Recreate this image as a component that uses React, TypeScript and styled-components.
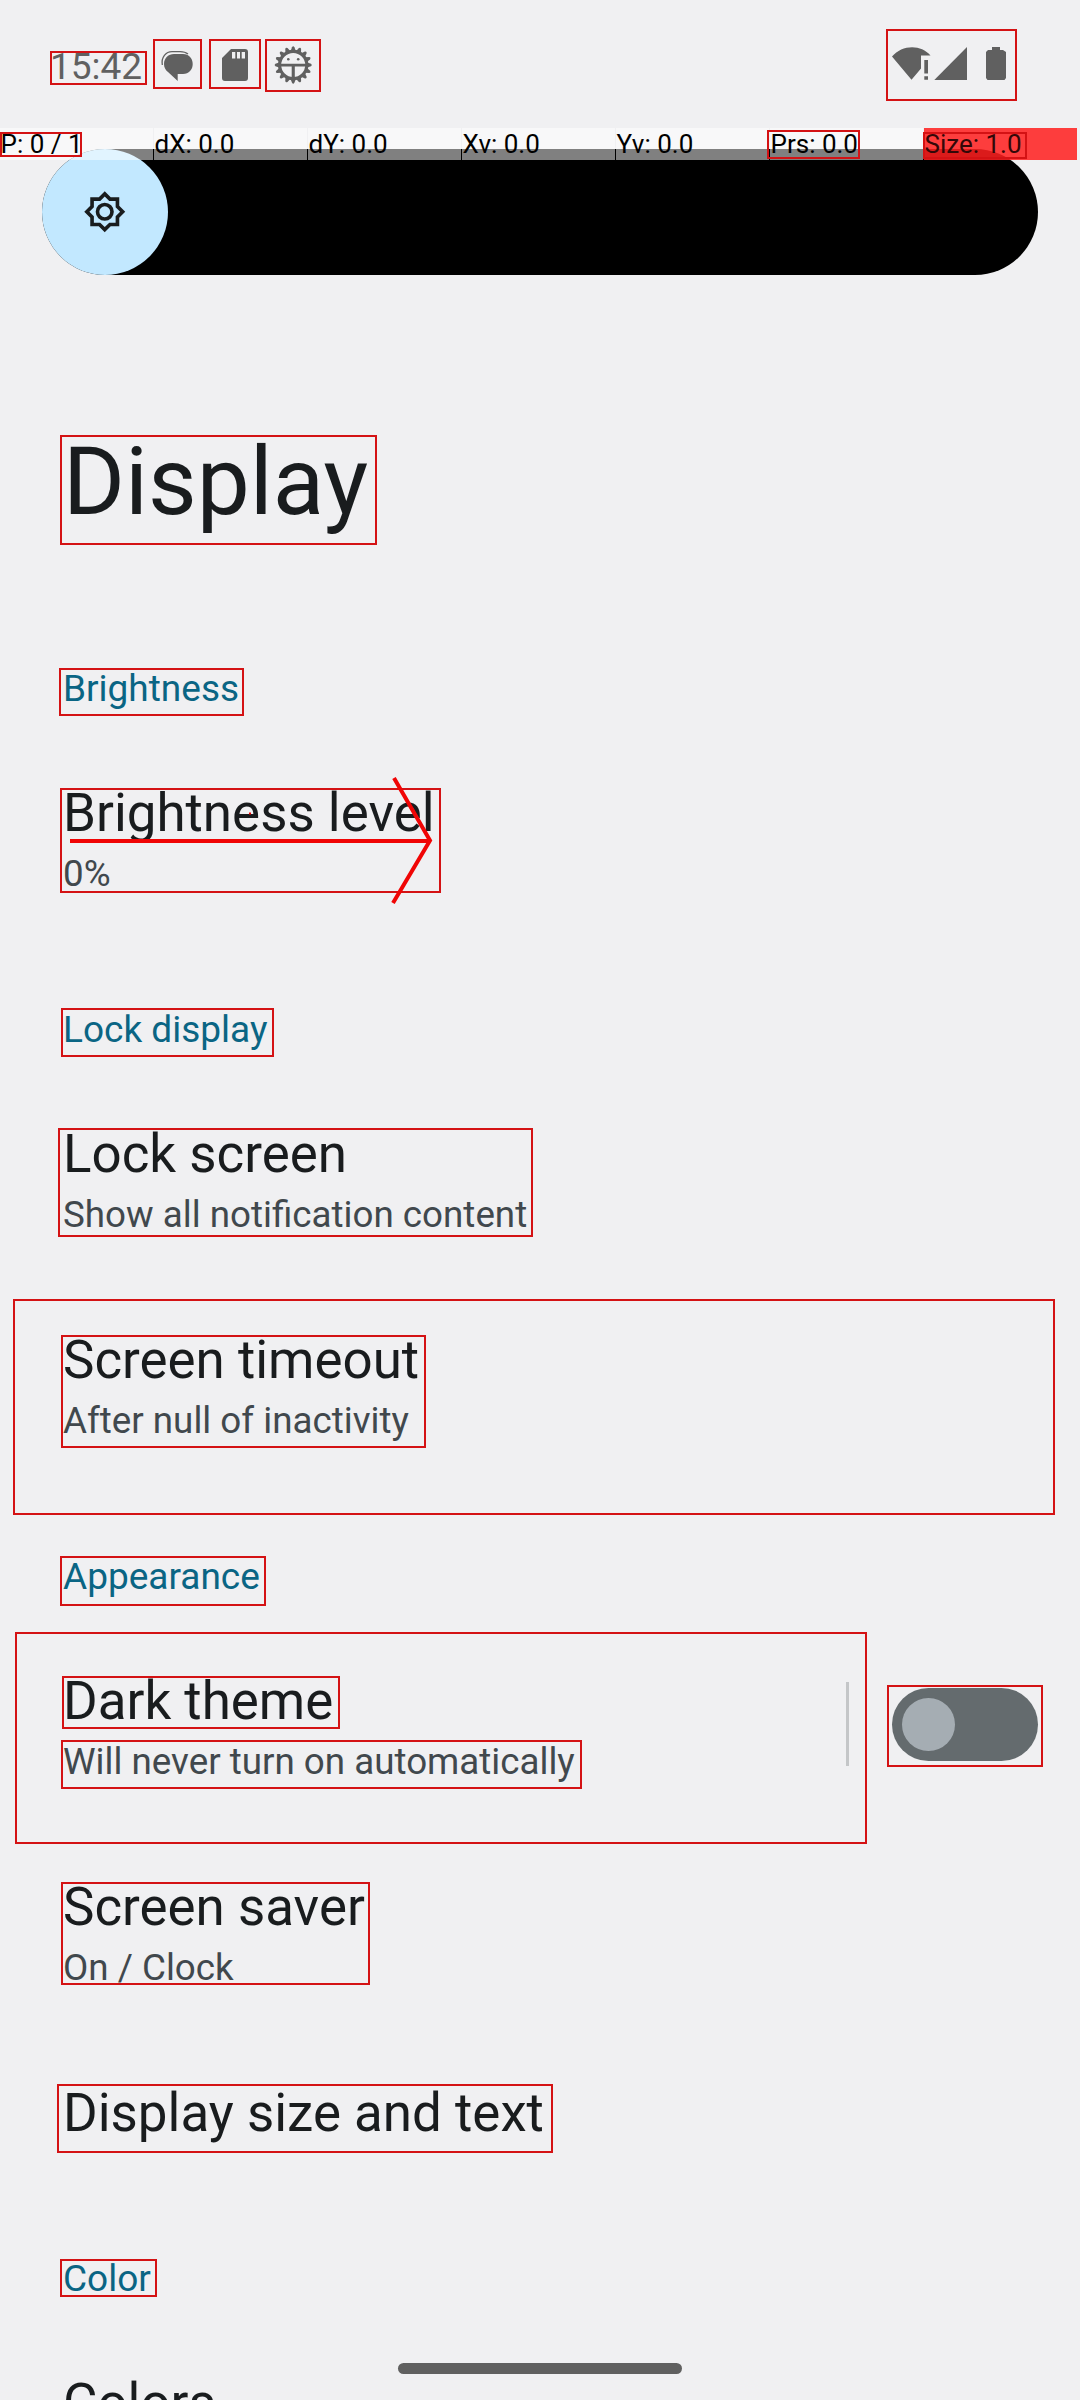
import React from "react";
import styled, { createGlobalStyle } from "styled-components";

const GlobalStyle = createGlobalStyle`
  html, body { margin: 0; padding: 0; background: #f0f0f2; }
  * { box-sizing: border-box; }
`;

const Screen = styled.main`
  position: relative;
  width: 1080px;
  height: 2400px;
  overflow: hidden;
  background: #f0f0f2;
  font-family: Roboto, "Noto Sans", sans-serif;
  color: #191c1e;
`;

const StatusBar = styled.header`
  display: flex;
  justify-content: space-between;
  height: 128px;
  padding: 41px 69px 0 50px;
  color: #606060;
`;

const StatusGroup = styled.div`
  display: flex;
  align-items: flex-start;
`;

const Clock = styled.span`
  width: 106px;
  padding: 4px 0 0 0;
  font-size: 37px;
  line-height: 43px;
`;

const StatusIcon = styled.svg<{ $width: number }>`
  display: block;
  width: ${(p) => p.$width}px;
  height: 48px;
  fill: currentColor;
`;

const SliderArea = styled.section`
  padding: 21px 42px 0;
`;

const SliderTrack = styled.div`
  display: flex;
  height: 126px;
  border-radius: 63px;
  background: #000;
`;

const SliderThumb = styled.div`
  display: flex;
  align-items: center;
  justify-content: center;
  width: 126px;
  height: 126px;
  border-radius: 50%;
  background: #c2e8ff;
  color: #191c1e;
`;

const PageTitle = styled.h1`
  margin: 0;
  height: 326px;
  padding: 151px 63px 0;
  font-size: 94.5px;
  font-weight: 400;
  line-height: 111px;
`;

const Category = styled.h2`
  margin: 0;
  height: 135px;
  padding: 66px 63px 0;
  font-size: 37px;
  font-weight: 400;
  line-height: 43px;
  color: #0a6584;
`;

const Row = styled.div`
  display: flex;
  align-items: center;
  justify-content: space-between;
  padding: 46px 42px 47px 63px;
`;

const RowText = styled.div`
  display: flex;
  flex-direction: column;
  gap: 8px;
`;

const RowTitle = styled.span`
  font-size: 52.9px;
  line-height: 62px;
  white-space: nowrap;
`;

const RowSummary = styled.span`
  font-size: 36.75px;
  line-height: 43px;
  white-space: nowrap;
  color: #41484d;
`;

const SwitchArea = styled.div`
  display: flex;
  align-items: center;
  gap: 43px;
  height: 84px;
  margin: 12px 0 17px;
`;

const Divider = styled.div`
  width: 3px;
  height: 84px;
  background: #c4c6c8;
`;

const SwitchTrack = styled.div`
  display: flex;
  align-items: center;
  width: 146px;
  height: 73px;
  padding-left: 10px;
  border-radius: 37px;
  background: #646b6e;
`;

const SwitchThumb = styled.div`
  width: 53px;
  height: 53px;
  border-radius: 50%;
  background: #a5adb3;
`;

const PointerBar = styled.div`
  position: absolute;
  top: 128px;
  left: 0;
  display: flex;
  gap: 1px;
  width: 1080px;
  height: 32px;
`;

const PointerCell = styled.span<{ $alert?: boolean }>`
  width: 153px;
  padding-left: 0.5px;
  font-size: 26px;
  line-height: 32px;
  white-space: nowrap;
  color: ${(p) => (p.$alert ? "#330808" : "#000")};
  background: ${(p) => (p.$alert ? "rgba(255, 32, 32, 0.86)" : "rgba(255, 255, 255, 0.5)")};
`;

const HomeHandle = styled.div`
  position: absolute;
  left: 398px;
  top: 2363px;
  width: 284px;
  height: 11px;
  border-radius: 6px;
  background: #606060;
`;

const Mark = styled.div<{ $box: number[] }>`
  position: absolute;
  left: ${(p) => p.$box[0]}px;
  top: ${(p) => p.$box[1]}px;
  width: ${(p) => p.$box[2] - p.$box[0]}px;
  height: ${(p) => p.$box[3] - p.$box[1]}px;
  border: 2px solid #d41214;
`;

const SwipeArrow = styled.svg`
  position: absolute;
  left: 60px;
  top: 770px;
  width: 380px;
  height: 140px;
  fill: none;
  stroke: #f00505;
  stroke-width: 4;
`;

/* Left, top, right, bottom of each highlighted element. */
const marks: number[][] = [
  [50, 51, 147, 85],
  [153, 39, 202, 89],
  [209, 39, 261, 89],
  [265, 39, 321, 92],
  [886, 29, 1017, 101],
  [0, 132, 82, 157],
  [767, 130, 860, 159],
  [923, 132, 1027, 159],
  [60, 435, 377, 545],
  [59, 668, 244, 716],
  [60, 788, 441, 893],
  [61, 1008, 274, 1057],
  [58, 1128, 533, 1237],
  [13, 1299, 1055, 1515],
  [61, 1335, 426, 1448],
  [60, 1556, 266, 1606],
  [15, 1632, 867, 1844],
  [62, 1676, 340, 1729],
  [61, 1740, 582, 1789],
  [887, 1685, 1043, 1767],
  [61, 1882, 370, 1985],
  [57, 2084, 553, 2153],
  [60, 2259, 157, 2297],
];

const pointerCells = ["P: 0 / 1", "dX: 0.0", "dY: 0.0", "Xv: 0.0", "Yv: 0.0", "Prs: 0.0", "Size: 1.0"];

const ChatIcon = () => (
  <StatusIcon $width={49} viewBox="156 41 49 48">
    <path d="M174 54H183C189 54 192.700 58.500 192.700 64C192.700 69.500 189 74 183 74H177.700V81L168 72C165.500 70 164 67.500 164 64C164 58 168.500 54 174 54Z" />
    <path d="M162.300 65C161 57 166 51.600 172 51.600H180C183.500 51.600 186 52.300 188 54" fill="none" stroke="currentColor" strokeWidth="1.300" />
  </StatusIcon>
);

const SdCardIcon = () => (
  <StatusIcon $width={61} viewBox="205 41 61 48">
    <path
      fillRule="evenodd"
      d="M231 49H245Q248 49 248 52V78Q248 81 245 81H225Q222 81 222 78V58ZM232 52V58.500H235.300V52ZM237 52V58.500H240V52ZM241.700 52V58.500H245V52Z"
    />
  </StatusIcon>
);

const teeth = Array.from({ length: 16 }, (_, i) => i * 22.5);

const DebugIcon = () => (
  <StatusIcon $width={55} viewBox="266 41 55 48">
    <path d="M280 63.700V62A13.200 13.200 0 0 1 306.500 62V63.700Z" fill="none" />
    <circle cx="293.200" cy="65" r="13.600" fill="none" stroke="currentColor" strokeWidth="3.200" />
    {teeth.map((angle) => (
      <path key={angle} d="M290.600 51L292 47.200Q293.200 45.500 294.400 47.200L295.800 51Z" transform={`rotate(${angle} 293.200 65)`} />
    ))}
    <path d="M280 63.700H306.500V66.500H280ZM291.700 66H294.800V79H291.700Z" />
    <circle cx="288.300" cy="59.300" r="1.300" />
    <circle cx="298.200" cy="59.300" r="1.300" />
  </StatusIcon>
);

const SystemIcons = () => (
  <StatusIcon $width={125} viewBox="886 41 125 48">
    <path d="M892 56.500C902 44.500 921 44 930.500 55.500H921V68.500L911.500 79.800Z" />
    <path d="M924.300 60H928V73.500H924.300ZM924.300 76.300H928V79.800H924.300Z" />
    <path d="M967 47V80H934.300Z" />
    <path d="M992 47H1000V50H1003L1006 52V78L1004.500 80H987.500L986 78V52L988 50H992Z" />
  </StatusIcon>
);

const BrightnessIcon = () => (
  <svg width="43.500" height="43.500" viewBox="0 0 24 24" fill="currentColor">
    <path
      fillRule="evenodd"
      d="M20 8.690V4h-4.690L12 .690 8.690 4H4v4.690L.690 12 4 15.310V20h4.690L12 23.310 15.310 20H20v-4.690L23.310 12zM18 14.480V18h-3.520L12 20.480 9.520 18H6v-3.520L3.520 12 6 9.520V6h3.520L12 3.520 14.480 6H18v3.520L20.480 12z"
    />
    <circle cx="12" cy="12" r="4" fill="none" stroke="currentColor" strokeWidth="2" />
  </svg>
);

type SettingProps = { title: string; summary?: string; children?: React.ReactNode };

const Setting = ({ title, summary, children }: SettingProps) => (
  <Row>
    <RowText>
      <RowTitle>{title}</RowTitle>
      {summary && <RowSummary>{summary}</RowSummary>}
    </RowText>
    {children}
  </Row>
);

export default function App() {
  return (
    <>
      <GlobalStyle />
      <Screen>
        <StatusBar>
          <StatusGroup>
            <Clock>15:42</Clock>
            <ChatIcon />
            <SdCardIcon />
            <DebugIcon />
          </StatusGroup>
          <StatusGroup>
            <SystemIcons />
          </StatusGroup>
        </StatusBar>

        <SliderArea>
          <SliderTrack>
            <SliderThumb>
              <BrightnessIcon />
            </SliderThumb>
          </SliderTrack>
        </SliderArea>

        <PageTitle>Display</PageTitle>

        <Category>Brightness</Category>
        <Setting title="Brightness level" summary="0%" />

        <Category>Lock display</Category>
        <Setting title="Lock screen" summary="Show all notification content" />
        <Setting title="Screen timeout" summary="After null of inactivity" />

        <Category>Appearance</Category>
        <Setting title="Dark theme" summary="Will never turn on automatically">
          <SwitchArea>
            <Divider />
            <SwitchTrack>
              <SwitchThumb />
            </SwitchTrack>
          </SwitchArea>
        </Setting>
        <Setting title="Screen saver" summary="On / Clock" />
        <Setting title="Display size and text" />

        <Category>Color</Category>
        <Setting title="Colors" />

        <PointerBar>
          {pointerCells.map((text, i) => (
            <PointerCell key={text} $alert={i === pointerCells.length - 1}>
              {text}
            </PointerCell>
          ))}
        </PointerBar>
        <HomeHandle />

        {marks.map((box) => (
          <Mark key={box.join()} $box={box} />
        ))}
        <SwipeArrow viewBox="60 770 380 140">
          <path d="M70 841H430M394 778L430 840.500L393 903" />
          <path d="M249 813.500H251" strokeWidth="2" />
        </SwipeArrow>
      </Screen>
    </>
  );
}
